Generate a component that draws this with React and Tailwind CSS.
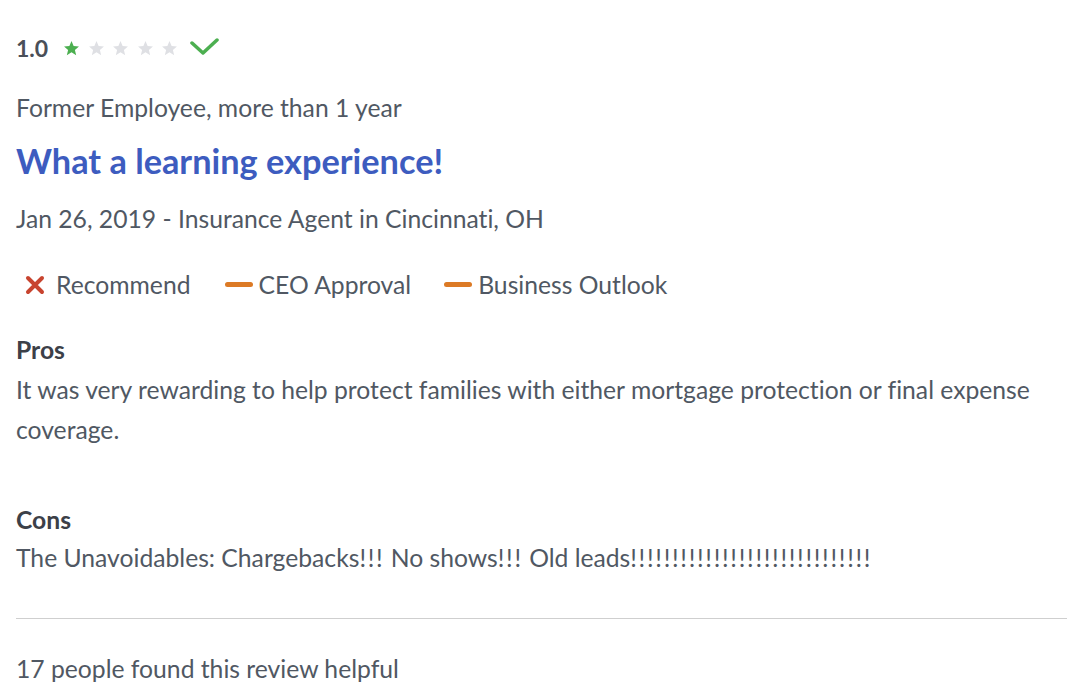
import React from "react";

const Star = ({ filled }) => (
    <svg width="17" height="17" viewBox="0 0 24 24">
        <path
            d="M12 1.5l3 7 7.5.6-5.7 4.9 1.8 7.4L12 17.4l-6.6 4 1.8-7.4L1.5 9.1 9 8.5z"
            fill={filled ? "#4caf50" : "#dfe0e4"}
        />
    </svg>
);

// wider exclamation marks, like the reference
const Bang = ({ n }) => <span className="tracking-[1.7px]">{"!".repeat(n)}</span>;

const App = () => {
    return (
        <div
            className="bg-white min-h-[692px] px-4 pt-[28px] text-[#505863] text-[24.7px]"
            style={{ fontFamily: "Lato, 'Open Sans', sans-serif", fontVariantLigatures: "none" }}
        >
            <div className="flex items-center h-10">
                <span className="text-[23px] font-bold text-[#4a4f58] mr-[15px]">1.0</span>
                <div className="flex items-center gap-[7.5px]">
                    <Star filled />
                    <Star />
                    <Star />
                    <Star />
                    <Star />
                </div>
                <svg width="30" height="18" viewBox="0 0 30 18" className="ml-[11px] mb-[3px]">
                    <path
                        d="M3 5l11 10L28 2"
                        fill="none"
                        stroke="#4caf50"
                        strokeWidth="3.5"
                        strokeLinecap="round"
                        strokeLinejoin="round"
                    />
                </svg>
            </div>

            <div className="mt-5 leading-10">Former Employee, more than 1 year</div>

            <h2 className="mt-[13px] leading-10 text-[34.3px] font-bold text-[#3d5cbf]">
                What a learning experience!
            </h2>

            <div className="mt-[18px] leading-10">
                Jan 26, 2019 - Insurance Agent in Cincinnati, OH
            </div>

            <div className="mt-[26px] flex items-center h-10">
                <div className="flex items-center ml-2">
                    <svg width="22" height="22" viewBox="0 0 22 22" className="mr-[10px]">
                        <path
                            d="M4 4l14 14M18 4L4 18"
                            stroke="#c8442f"
                            strokeWidth="4"
                            strokeLinecap="round"
                        />
                    </svg>
                    <span>Recommend</span>
                </div>
                <div className="flex items-center ml-[34px]">
                    <span className="block w-[28px] h-[5px] rounded-full bg-[#dc7a25] mr-[6px]" />
                    <span>CEO Approval</span>
                </div>
                <div className="flex items-center ml-[33px]">
                    <span className="block w-[28px] h-[5px] rounded-full bg-[#dc7a25] mr-[6px]" />
                    <span>Business Outlook</span>
                </div>
            </div>

            <div className="mt-[25px] leading-10 font-bold text-[#3c4048]">Pros</div>
            <p className="leading-10">
                It was very rewarding to help protect families with either mortgage
                protection or final expense coverage.
            </p>

            <div className="mt-[50px] leading-10 font-bold text-[#3c4048]">Cons</div>
            <p className="leading-[36px]">
                The Unavoidables: Chargebacks<Bang n={3} /> No shows<Bang n={3} /> Old
                leads<Bang n={29} />
            </p>

            <div className="mt-[42px] border-t border-[#cfcfcf] -mr-4" />

            <div className="mt-[30px] leading-10">17 people found this review helpful</div>
        </div>
    );
};

export default App;
